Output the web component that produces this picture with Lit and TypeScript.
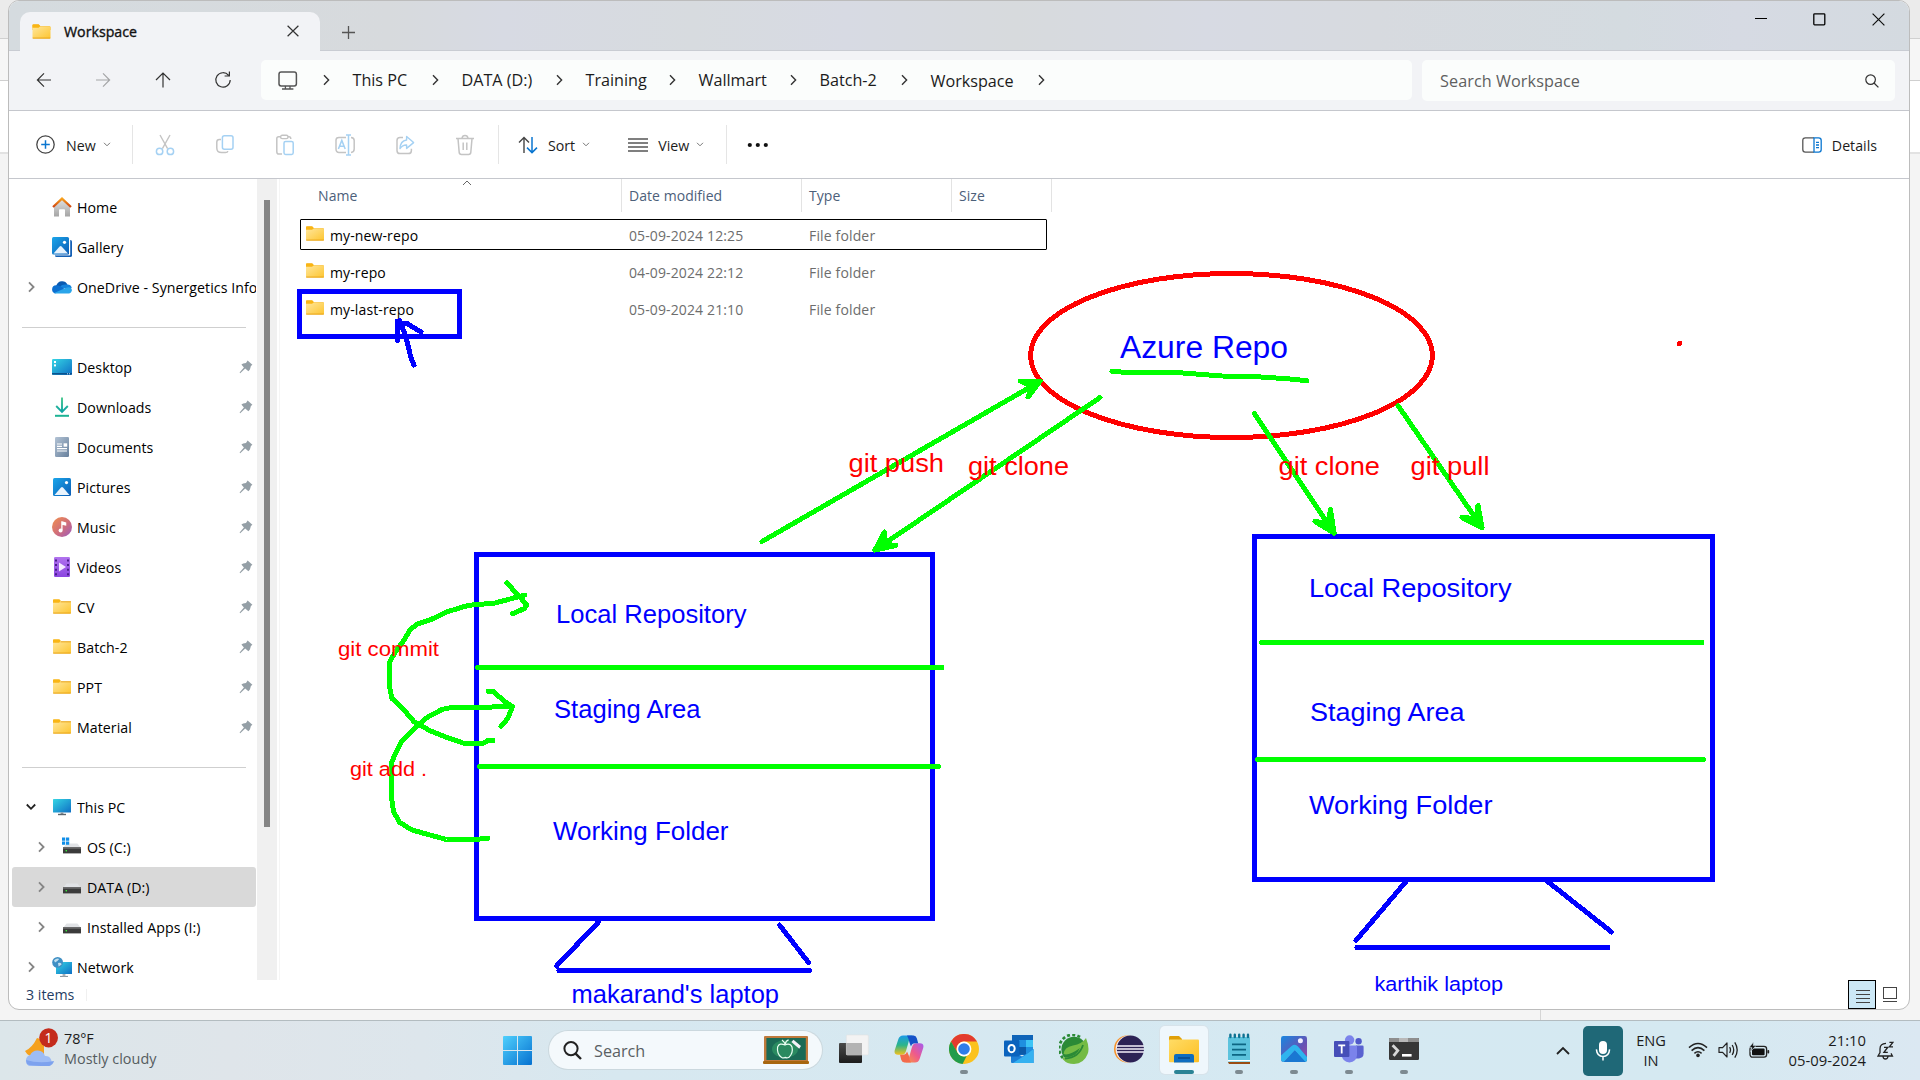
import { LitElement, html, svg, css, nothing } from "lit";
import { customElement } from "lit/decorators.js";
import { classMap } from "lit/directives/class-map.js";

const icon = (w: number, h: number, body: unknown, vw = w, vh = h) =>
  html`<svg class="ico" width=${w} height=${h} viewBox="0 0 ${vw} ${vh}" fill="none">${body}</svg>`;

/* ---------- file icons ---------- */
const folder = (w = 18, h = 15) =>
  icon(w, h, svg`
    <path d="M0 1.2Q0 .2 1 .2H6.2L8 2.2H17Q18 2.2 18 3.2V6H0Z" fill="#f7b316"/>
    <rect x="0" y="2.6" width="18" height="12" rx=".8" fill="url(#fold)"/>
    <path d="M.2 14.1H17.8" stroke="#e8a317" stroke-width="1"/>
    <path d="M0 .8H6.3L7.6 2.2 6.2 3.8H0Z" fill="#f9b514"/>
    <defs><linearGradient id="fold" x1="0" y1="0" x2="1" y2="1"><stop offset="0" stop-color="#ffe69b"/><stop offset="1" stop-color="#fdc530"/></linearGradient></defs>`, 18, 15);

const blueGrad = svg`<defs><linearGradient id="bl" x1="0" y1="0" x2="1" y2="1"><stop offset="0" stop-color="#1ba6ea"/><stop offset="1" stop-color="#0a5cb5"/></linearGradient></defs>`;
const cyanGrad = svg`<defs><linearGradient id="cy" x1="0" y1="0" x2="1" y2="1"><stop offset="0" stop-color="#35d6e4"/><stop offset="1" stop-color="#0f6fc5"/></linearGradient></defs>`;

const drive = svg`<path d="M4.6 6.5H15.4L19 11H1Z" fill="#e1e3e6"/><rect x="1" y="10.4" width="18" height="6" fill="#3b3b3b"/><rect x="1" y="10.4" width="18" height="1.6" fill="#5f5f5f"/><rect x="3.6" y="13" width="1.4" height="1.4" fill="#3cf03c"/>`;

const sideIcons: Record<string, unknown> = {
  home: icon(20, 20, svg`<path d="M2 9 10 2 18 9V19.5H13V13Q13 12.2 12.2 12.2H7.8Q7 12.2 7 13V19.5H2Z" fill="url(#hg)"/><path d="M1 10 10 1.6 19 10" stroke="url(#ho)" stroke-width="2.2"/>
    <defs><linearGradient id="hg" x1="0" y1="0" x2="0" y2="1"><stop stop-color="#e2e2e2"/><stop offset="1" stop-color="#a5a5a5"/></linearGradient><linearGradient id="ho" x1="0" y1="0" x2="0" y2="1"><stop stop-color="#f7a11c"/><stop offset="1" stop-color="#cf4310"/></linearGradient></defs>`),
  gallery: icon(20, 20, svg`${blueGrad}<rect x="3" y="3" width="17" height="17" rx="1.6" fill="#1560b4"/><rect x="17" y="2" width="1.2" height="16" fill="#fff"/><rect x="2" y="17.2" width="16" height="1.2" fill="#fff"/><rect x="0" y="0" width="17" height="17.4" rx="1.5" fill="url(#bl)"/><path d="M1.5 16.6 7.6 9.5Q8.6 8.4 9.6 9.5L16 16.6Z" fill="#e6f2fd"/><circle cx="12.5" cy="5.3" r="1.6" fill="#fff"/>`),
  onedrive: icon(20, 20, svg`<path d="M4.4 8.3A6 6 0 0 1 15.5 7.6L10 13H3Z" fill="#0a5ab2"/><path d="M.1 12.2A4.2 4.2 0 0 1 4.4 8.2Q6 8 8 9.2L14 13 3 16.4A4.1 4.1 0 0 1 .1 12.2Z" fill="#0c6fd0"/><path d="M15.4 7.6A4.5 4.5 0 0 1 19.8 11Q18 10.5 15 12L11 11 8.2 9.4Q10 6.8 15.4 7.6Z" fill="#1583dd"/><path d="M2 16.1 13 11.2Q15.6 9.8 18.4 10.4A3.3 3.3 0 0 1 17.2 16.4H4Q2.8 16.4 2 16.1Z" fill="#2aa5ea"/>`),
  desktop: icon(20, 20, svg`${cyanGrad}<rect y="2" width="20" height="16" rx="1.2" fill="url(#cy)"/><path d="M0 16.8H20" stroke="#0a4b86" stroke-width="1.4"/><rect x="2" y="4" width="2" height="2" fill="#fff"/><rect x="2" y="7.4" width="2" height="2" fill="#fff"/><path d="M15 16.8H19" stroke="#bfe4f5" stroke-dasharray="1 1"/>`),
  downloads: icon(20, 20, svg`<path d="M10 .5V14.5M4.2 9 10 14.8 15.8 9" stroke="url(#dg)" stroke-width="1.9"/><path d="M3 18.8H17" stroke="#1db394" stroke-width="2"/><defs><linearGradient id="dg" gradientUnits="userSpaceOnUse" x1="0" y1="0" x2="0" y2="15"><stop stop-color="#49c98c"/><stop offset="1" stop-color="#0ca4a4"/></linearGradient></defs>`),
  documents: icon(20, 20, svg`<rect x="3" y="0" width="14" height="20" rx="1.3" fill="url(#dc)"/><path d="M5 7H10M5 9.4H10M5 11.7H15M5 14H15" stroke="#fff" stroke-width="1.2"/><rect x="11.6" y="6.3" width="3.6" height="3.4" fill="#fff"/><defs><linearGradient id="dc" x1="0" y1="0" x2="1" y2="1"><stop stop-color="#b3c3d5"/><stop offset="1" stop-color="#67809c"/></linearGradient></defs>`),
  pictures: icon(20, 20, svg`${blueGrad}<rect x="1" y="1" width="18" height="18" rx="1.5" fill="url(#bl)"/><path d="M2.5 18 9 10.6Q10 9.6 11 10.6L17.5 18Z" fill="#eaf4fd"/><circle cx="14.5" cy="5.6" r="1.6" fill="#fff"/>`),
  music: icon(20, 20, svg`<circle cx="10" cy="10" r="10" fill="url(#mu)"/><path d="M9.9 4.2V13M9.9 4.9 13.6 6V8L9.9 7" stroke="#fff" stroke-width="1.3" fill="#fff"/><circle cx="8.6" cy="13.4" r="2" fill="#fff"/><defs><linearGradient id="mu" x1="0" y1="0" x2="1" y2="1"><stop stop-color="#f2914c"/><stop offset=".55" stop-color="#cf6d7c"/><stop offset="1" stop-color="#9a5cc2"/></linearGradient></defs>`),
  videos: icon(20, 20, svg`<rect x="2" y="0" width="16" height="20" rx="1.3" fill="url(#vi)"/><path d="M4 2.5V19M16 2.5V19" stroke="#4a1e8c" stroke-width="2" stroke-dasharray="2 2.6"/><path d="M7 5.6 14 10 7 14.4Z" fill="#f4eaff"/><defs><linearGradient id="vi" x1="0" y1="0" x2="0" y2="1"><stop stop-color="#b173ee"/><stop offset="1" stop-color="#8a45e0"/></linearGradient></defs>`),
  pc: icon(20, 20, svg`${cyanGrad}<rect x="1" y="2" width="18" height="13.5" rx=".6" fill="url(#cy)"/><rect x="8.6" y="15.5" width="2.8" height="1.6" fill="#8a949c"/><path d="M6 17.5H14" stroke="#5d666d" stroke-width="1.4"/>`),
  osdrive: icon(20, 20, svg`${drive}<path d="M0 .6H3.2V3.8H0ZM4 .6H7.2V3.8H4ZM0 4.6H3.2V7.8H0ZM4 4.6H7.2V7.8H4Z" fill="#118ee8"/>`),
  drive: icon(20, 20, svg`${drive}`),
  network: icon(20, 20, svg`${cyanGrad}<rect x="4" y="5" width="16" height="12" fill="url(#cy)"/><path d="M8 19.6H16" stroke="#8d979f" stroke-width="1.4"/><rect x="10.6" y="17" width="2.8" height="2.3" fill="#a8b0b6"/><circle cx="5.6" cy="5.4" r="5.4" fill="#3f8fc4"/><path d="M2 3.2Q5 .6 7.2 2 5 5 3 5.5ZM6 6Q9.4 5 9.6 7.4L6.6 9.4Z" fill="#c2e0ef"/>`),
  folder: icon(20, 20, svg`<g transform="translate(1 2)"><rect y="2.6" width="18" height="12" rx=".8" fill="url(#fs)"/><path d="M.2 14.1H17.8M7.5 2.8H18" stroke="#e8a317"/><path d="M0 .9Q0 .2.8.2H6.3L7.8 1.8 6.2 3.8H0Z" fill="#f9b514"/></g><defs><linearGradient id="fs" x1="0" y1="0" x2="1" y2="1"><stop stop-color="#ffe69b"/><stop offset="1" stop-color="#fdc530"/></linearGradient></defs>`),
};

const pin = icon(14, 14, svg`<path d="M8.6.4 13.4 4.8 11.9 6 10.9 9.5 9.4 11.2 6.2 8.6 1.2 13.2 .6 12.6 4.9 7.4 2.4 4.6 4.2 3.6 7 3Z" fill="#949fa6"/>`);
const chevR = (c: string, s = 1.8) => icon(7, 12, svg`<path d="M1 1.3 5.6 6 1 10.7" stroke=${c} stroke-width=${s}/>`);
const chevD = icon(8, 5, svg`<path d="M1 .8 4 3.8 7 .8" stroke="#777" stroke-width="1"/>`);

type Side = { label: string; icon: string; pin?: boolean; chev?: "r" | "d"; sub?: boolean; sel?: boolean };
const nav: (Side | null)[] = [
  { label: "Home", icon: "home" },
  { label: "Gallery", icon: "gallery" },
  { label: "OneDrive - Synergetics Infotech", icon: "onedrive", chev: "r" },
  null,
  { label: "Desktop", icon: "desktop", pin: true },
  { label: "Downloads", icon: "downloads", pin: true },
  { label: "Documents", icon: "documents", pin: true },
  { label: "Pictures", icon: "pictures", pin: true },
  { label: "Music", icon: "music", pin: true },
  { label: "Videos", icon: "videos", pin: true },
  { label: "CV", icon: "folder", pin: true },
  { label: "Batch-2", icon: "folder", pin: true },
  { label: "PPT", icon: "folder", pin: true },
  { label: "Material", icon: "folder", pin: true },
  null,
  { label: "This PC", icon: "pc", chev: "d" },
  { label: "OS (C:)", icon: "osdrive", chev: "r", sub: true },
  { label: "DATA (D:)", icon: "drive", chev: "r", sub: true, sel: true },
  { label: "Installed Apps (I:)", icon: "drive", chev: "r", sub: true },
  { label: "Network", icon: "network", chev: "r" },
];

@customElement("nav-pane")
class NavPane extends LitElement {
  static styles = css`
    :host { display: flex; width: 269px; height: 801px; overflow: hidden; background: #fff; flex: none; }
    .list { width: 248px; padding-top: 8px; box-sizing: border-box; overflow: hidden; }
    .row { display: flex; align-items: center; height: 40px; width: 244px; margin-left: 3px; border-radius: 3px; box-sizing: border-box; }
    .sel { background: #d9d9d9; }
    .chev { width: 40px; padding-left: 16px; box-sizing: border-box; display: flex; flex: none; }
    .sub .chev { width: 50px; padding-left: 26px; }
    .down .chev { padding-left: 14px; }
    .ico { display: block; flex: none; }
    .label { margin-left: 5px; font-size: 14.2px; white-space: nowrap; color: #000; letter-spacing: 0.04px; flex: 1; min-width: 0; overflow: hidden; }
    .pin { margin-right: 3px; }
    .rule { height: 40px; display: flex; align-items: center; padding: 0 11px 0 13px; }
    .rule::before { content: ""; height: 1px; flex: 1; background: #cfcfcf; }
    .bar { width: 20px; background: #f0f0f0; box-sizing: border-box; padding: 21px 7px 0; }
    .thumb { height: 627px; width: 6px; background: #858585; }
  `;
  render() {
    return html`<div class="list">
        ${nav.map((n) =>
          n
            ? html`<div class=${classMap({ row: true, sub: !!n.sub, sel: !!n.sel, down: n.chev === "d" })}>
                <div class="chev">${n.chev === "r" ? chevR("#858585") : n.chev === "d"
                  ? icon(10, 8, svg`<path d="M.8 1.5 5 5.8 9.2 1.5" stroke="#222" stroke-width="1.8"/>`) : nothing}</div>
                ${sideIcons[n.icon]}
                <div class="label">${n.label}</div>
                ${n.pin ? html`<div class="pin">${pin}</div>` : nothing}
              </div>`
            : html`<div class="rule"></div>`
        )}
      </div>
      <div class="bar"><div class="thumb"></div></div>`;
  }
}

const files = [
  ["my-new-repo", "05-09-2024 12:25"],
  ["my-repo", "04-09-2024 22:12"],
  ["my-last-repo", "05-09-2024 21:10"],
];

@customElement("file-list")
class FileList extends LitElement {
  static styles = css`
    :host { display: block; flex: 1; border-left: 1px solid #f5f5f5; margin-left: 1px; }
    .ico { display: block; flex: none; }
    .head { display: grid; grid-template-columns: 342px 180px 150px 100px; height: 33px; color: #4c607a; font-size: 14px; position: relative; }
    .h { border-right: 1px solid #e3e3e3; padding-left: 7px; line-height: 33px; box-sizing: border-box; letter-spacing: 0.05px; }
    .h.name { padding-left: 38px; letter-spacing: 0.1px; }
    .caret { position: absolute; left: 182px; top: 1px; }
    .rows { padding: 4px 0 0 20px; }
    .row { display: grid; grid-template-columns: 329px 180px 1fr; width: 747px; height: 37px; padding: 4px 0 2px; box-sizing: border-box; font-size: 14px; line-height: 31px; color: #6d6d6d; }
    .row .name { color: #000; }
    .row.focus { height: 31px; margin: 3px 0; padding: 1px 0 0; outline: 1px solid #000; outline-offset: -1px; border-radius: 1px; }
    .name { display: flex; align-items: center; gap: 6px; padding-left: 6px; letter-spacing: 0.12px; }
    .name .ico { margin-bottom: 5px; }
    .date { letter-spacing: 0.12px; }
    .type { letter-spacing: 0.15px; }
  `;
  render() {
    return html`<div class="head">
        <div class="h name">Name</div><div class="h">Date modified</div><div class="h">Type</div><div class="h">Size</div>
        <div class="caret">${icon(10, 6, svg`<path d="M1 5 5 1 9 5" stroke="#666"/>`)}</div>
      </div>
      <div class="rows">
        ${files.map(([n, d], i) => html`<div class=${classMap({ row: true, focus: i === 0 })}>
          <div class="name">${folder()}<span>${n}</span></div><div class="date">${d}</div><div class="type">File folder</div>
        </div>`)}
      </div>`;
  }
}

/* ---------- pen annotations ---------- */
const label = (x: number, y: number, w: number, s: number, c: string, t: string) =>
  svg`<text x=${x} y=${y} textLength=${w} lengthAdjust="spacingAndGlyphs" font-size=${s} fill=${c}>${t}</text>`;
const B = "#0000ff", R = "#ff0000";

@customElement("ink-layer")
class InkLayer extends LitElement {
  static styles = css`
    :host { position: absolute; inset: 0; pointer-events: none; }
    svg { display: block; }
    text { font-family: "Liberation Sans", Arial, sans-serif; }
    .ink { fill: none; stroke-width: 5; stroke-linecap: round; stroke-linejoin: round; shape-rendering: crispEdges; }
    .blue { stroke: #0000ff; }
    .green { stroke: #00ff00; }
    .head { fill: #00ff00; }
    .red { stroke: #ff0000; }
    .box { stroke-linejoin: miter; }
    .dot { fill: #ff0000; stroke: none; }
  `;
  render() {
    return html`<svg width="1920" height="1080" viewBox="0 0 1920 1080">
      <g class="ink blue">
        <g class="box">
          <rect x="299.5" y="291.5" width="160" height="45"/>
          <rect x="476.5" y="554.5" width="456" height="364"/>
          <rect x="1254.5" y="536.5" width="458" height="342.5"/>
        </g>
        <path d="M414 365 411 358 406 337 399.5 320.5M397.5 340.5V321M399 323.5H407L421 332"/>
        <path d="M598.5 922 556.5 966M779.5 925 808.5 962.5M559 970.5H809.5"/>
        <path d="M1406 881.5 1356 940.5M1547 881 1611.5 932M1357 947.5H1608"/>
      </g>
      <g class="ink red">
        <ellipse cx="1231.5" cy="355.5" rx="201" ry="82"/>
        <rect class="dot" x="1677" y="341" width="5" height="5" rx="2"/>
      </g>
      <g class="ink green">
        <path d="M477.5 667.5H942M479.5 766.5H938.5M1261.5 642.5H1702M1257.5 759.5H1703.5"/>
        <path d="M1112 371.5 1130 372.5 1176 372.5 1222 376 1254 376.5 1290 379 1307 380.7"/>
        <path d="M525 595 510 599 493 603.5 475 604.5 465 606.3 446.5 612 430 620 417 624 410 630 404 640 395.5 651.7 389.4 662.3V685.7L391.8 698.3 404 710 414 721.7 430 730.7 446.5 737.3 465 743.7H482L488 740.5H493"/>
        <path d="M507 583 518 595 527 605 524 608.7 512.6 613.7"/>
        <path d="M488 838.3 475 839.5H446.5L430 835 412 830 399.6 822.3 393.5 811.7 391.4 796.7V763.3L395.5 753.3 401.6 741.7 416 726.7 428 716.7 442.4 709.3 452.6 707.3H483L512.6 706.3"/>
        <path d="M488 691.3 493.5 691.7 503.7 700.7 512.5 706.7 507.8 718.3 501 726.5"/>
        <path d="M762 541.5 1039 382M1100 397.5 875 550M1254.5 413.5 1334 533M1398 405.5 1482 527.5"/>
        <g class="head">
          <path d="M1040 381 1020 381 1032 386 1028 397Z"/>
          <path d="M875 550 884.5 532 884 544 896 545.5Z"/>
          <path d="M1334 533 1330.5 509.5 1328 523 1315 521.5Z"/>
          <path d="M1482 527.5 1478 505.5 1476 518.5 1462 517.5Z"/>
        </g>
      </g>
      ${label(1120, 358, 168, 31, B, "Azure Repo")}
      ${label(556, 623, 190.5, 26, B, "Local Repository")}
      ${label(554, 718, 146.5, 26, B, "Staging Area")}
      ${label(553, 840, 175.5, 26, B, "Working Folder")}
      ${label(571.5, 1003, 207.5, 26, B, "makarand's laptop")}
      ${label(1309, 597, 202.5, 26, B, "Local Repository")}
      ${label(1310, 721, 154.5, 26, B, "Staging Area")}
      ${label(1309, 814, 183.5, 26, B, "Working Folder")}
      ${label(1374.5, 991, 128.5, 20.5, B, "karthik laptop")}
      ${label(848.5, 472, 95.5, 25.5, R, "git push")}
      ${label(968, 475, 101, 25.5, R, "git clone")}
      ${label(1278.5, 475, 101.5, 25.5, R, "git clone")}
      ${label(1410.5, 475, 79, 25.5, R, "git pull")}
      ${label(338, 656, 101, 20.5, R, "git commit")}
      ${label(350, 776, 77, 20.5, R, "git add .")}
    </svg>`;
  }
}

/* ---------- command bar icons ---------- */
const G = "#c4c4c4", LB = "#a5d1f3";
const cmd: Record<string, unknown> = {
  cut: icon(20, 22, svg`<path d="M5 1 12.6 14.6M15 1 7.4 14.6" stroke=${G} stroke-width="1.4"/><circle cx="4.6" cy="17.4" r="3.2" stroke=${LB} stroke-width="1.5"/><circle cx="15.4" cy="17.4" r="3.2" stroke=${LB} stroke-width="1.5"/>`),
  copy: icon(20, 22, svg`<path d="M6 5.4H4.4Q1.8 5.4 1.8 8V14Q1.8 18.6 6.6 18.6H10.4Q12.6 18.6 12.8 17" stroke=${G} stroke-width="1.5"/><rect x="7.4" y="1.8" width="10.6" height="13.4" rx="2" stroke=${LB} stroke-width="1.5"/>`),
  paste: icon(20, 22, svg`<path d="M6 2.8H3.6Q1.8 2.8 1.8 4.6V17.4Q1.8 20 3.8 20H7M12.8 2.8H14Q15.8 2.8 15.8 5" stroke=${G} stroke-width="1.5"/><rect x="5.6" y="1.2" width="7.4" height="3.4" rx="1.6" stroke=${G} stroke-width="1.4"/><rect x="9" y="7.4" width="9.2" height="13" rx="1.6" stroke=${LB} stroke-width="1.5"/>`),
  rename: icon(20, 22, svg`<path d="M11 3.4H4Q1 3.4 1 6V15Q1 18.4 4 18.4H11M16 3.4Q19.2 3.6 19.2 6.6V15Q19.2 18.2 16 18.4" stroke=${G} stroke-width="1.5"/><path d="M11 1H16M11 21H16M13.5 1V21" stroke=${LB} stroke-width="1.5"/><path d="M3.4 15 6.8 6.4 10.2 15M4.6 12.2H9" stroke=${LB} stroke-width="1.5"/>`),
  share: icon(20, 22, svg`<path d="M8 3.4H5Q2 3.4 2 6.4V16.4Q2 19.6 5 19.6H13.4Q16.4 19.6 16.4 16.4V14.8" stroke=${G} stroke-width="1.5"/><path d="M11.6 2.4 18.6 8.6 11.6 14.4V11Q7.6 10.8 5 14.6 5.2 7 11.6 6Z" stroke=${LB} stroke-width="1.4" stroke-linejoin="round"/>`),
  del: icon(20, 22, svg`<path d="M1 4.4H19M7 4.2Q7.4 1.4 10 1.4T13 4.2M3 4.6 4.2 18.4Q4.4 20.4 6.4 20.4H13.6Q15.6 20.4 15.8 18.4L17 4.6M8.2 8.4V16M11.8 8.4V16" stroke=${G} stroke-width="1.5"/>`),
};

/* ---------- taskbar icons ---------- */
const winLogo = icon(29, 29, svg`<defs><linearGradient id="wl" gradientUnits="userSpaceOnUse" x1="0" y1="0" x2="29" y2="29"><stop stop-color="#4fd0fd"/><stop offset="1" stop-color="#0671d0"/></linearGradient></defs><path d="M0 1Q0 0 1 0H14V14H0ZM15 0H28Q29 0 29 1V14H15ZM0 15H14V29H1Q0 29 0 28ZM15 15H29V28Q29 29 28 29H15Z" fill="url(#wl)"/>`);
const board = icon(46, 28, svg`<rect x="1" y="0" width="44" height="26" rx="1" fill="#c07a3c"/><rect x="3.4" y="2" width="39.4" height="22" fill="#1b6a55"/><ellipse cx="22" cy="13" rx="13" ry="9" fill="#2a8a60"/><rect y="25" width="46" height="3" rx="1" fill="#a8660f"/><path d="M22 9Q16.5 6.4 14.6 11 13.6 18 18.6 21.4 20.4 22.4 22 21.4 24 22.4 26 21.2 30.4 17 29 11 27 6.8 22 9ZM22 9Q21.8 6 19 4M22.4 8Q22.6 4.6 25.6 3.8" stroke="#eafff2" stroke-width="1.2"/><path d="M28.4 6 30.4 3.8 38 10 36.2 12.8Z" fill="#f3f0f7"/>`);

const apps: { i: unknown; run?: boolean; active?: boolean }[] = [
  { i: icon(30, 30, svg`<defs><linearGradient id="tv" x1="0" y1="0" x2="0" y2="1"><stop stop-color="#4a4a4a"/><stop offset="1" stop-color="#1c1c1c"/></linearGradient></defs><rect x="0" y="9" width="23" height="20" rx="1" fill="url(#tv)"/><rect x="7.4" y="1" width="22" height="20" rx="1" fill="#f3f3f3" stroke="#e2e2e2" stroke-width=".6"/><rect x="7.4" y="9" width="15.6" height="12" fill="#b3b3b3"/>`) },
  { i: icon(30, 30, svg`<defs><linearGradient id="ca" x1="0" y1="0" x2="0" y2="1"><stop stop-color="#1b9be8"/><stop offset=".5" stop-color="#2bb58a"/><stop offset="1" stop-color="#f4c11c"/></linearGradient><linearGradient id="cb" x1="1" y1="0" x2="0" y2="1"><stop stop-color="#a55bf0"/><stop offset=".5" stop-color="#ee5a8c"/><stop offset="1" stop-color="#fb9d3c"/></linearGradient></defs>
    <path d="M19 1.5H9Q5.6 1.5 4.4 5L.8 16Q-.4 20.6 4 20.8H8Q11 20.6 12 17L15 6.6Q16 2 19 1.5Z" fill="url(#ca)"/><path d="M11 28.5H21Q24.4 28.5 25.6 25L29.2 14Q30.4 9.4 26 9.2H22Q19 9.4 18 13L15 23.4Q14 28 11 28.5Z" fill="url(#cb)"/><path d="M13 1.5H19.6Q22 1.6 22.8 4.2L24.2 9.2H21Q18 9.2 17 12.4L15.6 9Q14.8 5 13 1.5Z" fill="#1552c8"/><path d="M17 28.5H10.4Q8 28.4 7.2 25.8L6 20.8H9Q12 20.8 13 17.6L15 22Q15 26 17 28.5Z" fill="#f36a4c"/>`) },
  { run: true, i: icon(30, 30, svg`<circle cx="15" cy="15" r="15" fill="#fbc21d"/><path d="M2 7.5A15 15 0 0 1 28 7.5H15A7.5 7.5 0 0 0 8.2 18.4Z" fill="#e33b2e"/><path d="M2 7.5 8.6 18.8A7.5 7.5 0 0 0 17.6 22L13.6 30A15 15 0 0 1 2 7.5Z" fill="#219c4b"/><circle cx="15" cy="15" r="7.4" fill="#fff"/><circle cx="15" cy="15" r="5.8" fill="#2f7de9"/>`) },
  { i: icon(30, 30, svg`<rect x="8" y="1" width="21" height="20" fill="#0f64b8"/><path d="M15 6H22V13H15Z" fill="#1f8fe0"/><path d="M22 6H29V13H22Z" fill="#3dc4f5"/><path d="M15 13H22V20H15Z" fill="#0c59a8"/><path d="M22 13H29V20H22Z" fill="#1f8fe0"/><path d="M7 15 18 22.6 29.6 15V29H8Q7 29 7 28Z" fill="#1d7fd6"/><path d="M29.6 15V29H9L20 22Z" fill="#35b1f0"/><rect x="0" y="6.6" width="15.4" height="16" rx="1" fill="#0b63bd"/><ellipse cx="7.6" cy="14.6" rx="3.1" ry="3.7" stroke="#fff" stroke-width="2"/>`) },
  { i: icon(30, 30, svg`<circle cx="15" cy="15.4" r="12.6" fill="#2b8a36"/><path d="M4 24A13.6 13.6 0 0 1 21 3" stroke="#2b8a36" stroke-width="2.8" stroke-dasharray="3 2.2"/><path d="M27 4Q31 14 28.6 20 25 29.6 15 30 8 30 4 25.4 3 24 5 23.4 17 24 21 14 10 22 4.6 20 5 13 14 11.4 23 10 27 4Z" fill="#74bb44"/><path d="M6 24.6Q20 23.6 24 11" stroke="#2b8a36" stroke-width="1.8"/>`) },
  { i: icon(30, 30, svg`<ellipse cx="13" cy="15" rx="13" ry="13.6" fill="#f6922a"/><ellipse cx="15" cy="15" rx="13.4" ry="13.6" fill="#f5eef2"/><circle cx="16.4" cy="15" r="13.6" fill="#2c2255"/><path d="M3 12H30M2.8 15H30M3 18H30" stroke="#f3f0fa" stroke-width="1.5"/>`) },
  { active: true, i: icon(30, 30, svg`<path d="M0 3.4Q0 2 1.4 2H10L13 5V10H0Z" fill="#e0a009"/><rect y="5.6" width="30" height="22.6" rx="1" fill="url(#ex)"/><path d="M5 28.4V22Q5 20 7 20H23Q25 20 25 22V28.4Z" fill="#0f6dbf"/><path d="M9 24H21" stroke="#063f7c" stroke-width="1.2"/><defs><linearGradient id="ex" x1="0" y1="0" x2="1" y2="1"><stop stop-color="#ffdc66"/><stop offset="1" stop-color="#fdbf22"/></linearGradient></defs>`) },
  { run: true, i: icon(30, 32, svg`<rect x="4" y="4" width="22" height="26" rx="1" fill="#5cc3dd"/><path d="M4 27H26V28.4H4Z" fill="#fff"/><path d="M4 29H26V31H5Z" fill="#9a4c12"/><path d="M8 11.4H22M8 16.6H22M8 21.8H22" stroke="#0c6683" stroke-width="1.7"/><path d="M6.4 1.8V4M10.8 1.8V4M15.2 1.8V4M19.6 1.8V4M24 1.8V4" stroke="#0e7191" stroke-width="2.4" stroke-linecap="round"/>`) },
  { run: true, i: icon(30, 30, svg`<defs><linearGradient id="ph" x1="0" y1="0" x2="1" y2="1"><stop stop-color="#1787e0"/><stop offset=".6" stop-color="#6653b5"/><stop offset="1" stop-color="#a34aa0"/></linearGradient></defs><rect x="2" y="2" width="26" height="26" rx="2.4" fill="url(#ph)"/><path d="M14 28 19 13 28 23V25.6Q28 28 25.6 28Z" fill="#1670c9"/><path d="M2 21.6 12.6 12Q16 9.4 19 12.4L28 23V25.6Q28 28 26.4 28L15.8 16.6 5 28Q2 28 2 25.6Z" fill="#2fb4ee"/><path d="M15.8 16.6 26.4 28H5Z" fill="#1a78d2"/><circle cx="21.4" cy="6.8" r="2.5" fill="#f3f0ff"/>`) },
  { run: true, i: icon(30, 30, svg`<circle cx="15.6" cy="6" r="4.7" fill="#7b83eb"/><circle cx="24.6" cy="7.2" r="3.2" fill="#5059c9"/><path d="M22 11.6H28.4Q29.6 11.6 29.6 13V19.6Q29.6 24 25 24.4H22Z" fill="#5a62d0"/><path d="M7.6 11.6H23V21Q22.6 28 15.4 28.4 8.4 28 7.6 21Z" fill="#7b83eb"/><rect x="0" y="7" width="15.4" height="16" rx="1" fill="#464eb8"/><path d="M4.2 11.4H11.2M7.7 11.4V19.4" stroke="#fff" stroke-width="1.8"/>`) },
  { run: true, i: icon(30, 30, svg`<rect x="0" y="4" width="30" height="22" rx="1.2" fill="#373737"/><path d="M0 8V5.2Q0 4 1.2 4H28.8Q30 4 30 5.2V8Z" fill="#8e8e8e"/><rect x="10" y="4" width="9" height="4" fill="#b9b9b9"/><path d="M3.6 11.2 8.8 16.6 4.6 21.8" stroke="#d7d7d7" stroke-width="2.8"/><rect x="13" y="20" width="9.6" height="2.6" fill="#fff"/>`) },
];

@customElement("task-bar")
class TaskBar extends LitElement {
  static styles = css`
    :host { display: flex; align-items: flex-start; height: 60px; box-sizing: border-box; border-top: 1px solid #b3bcc0; color: #1b1b1b;
      background: linear-gradient(90deg, #dce6ea 0, #dfe5ea 12%, #dde6ec 22%, #d7e8f0 32%, #d5e9f2 70%, #d5e9f1 88%, #dbe8f2 100%); }
    .ico { display: block; flex: none; }
    .weather { display: flex; width: 503px; padding: 7px 0 0 24px; box-sizing: border-box; }
    .wtext { font-size: 14.4px; line-height: 20px; margin-left: 6px; margin-top: 1px; }
    .muted { color: #555c60; letter-spacing: 0.02px; }
    .hot { letter-spacing: -0.1px; }
    .start { margin-top: 15px; width: 46px; }
    .search { display: flex; align-items: center; width: 273px; height: 38px; margin-top: 10px; border-radius: 19px; background: #f4f9fc; box-shadow: 0 0 0 1px #cbd8de; box-sizing: border-box; padding: 0 13px 0 14px; }
    .search .q { flex: 1; margin: 1px 0 0 12px; font-size: 16.2px; color: #5a5f63; }
    .apps { display: flex; margin-left: 8px; gap: 7px; margin-top: 5px; }
    .app { width: 48px; height: 48px; display: flex; flex-direction: column; align-items: center; border-radius: 5px; }
    .active { background: #eff7fc; box-shadow: 0 0 0 1px #d7e3ea; }
    .glyph { height: 44px; display: flex; align-items: center; padding-top: 2px; box-sizing: border-box; }
    .dot { width: 8px; height: 4px; border-radius: 2px; background: #7d8a91; }
    .active .dot { width: 20px; background: #2b8395; }
    .tray { display: flex; margin-left: auto; height: 58px; padding-right: 26px; align-items: center; }
    .up { margin-right: 13px; }
    .mic { width: 40px; height: 50px; border-radius: 5px; background: #1f6877; display: flex; align-items: center; justify-content: center; margin-right: 12px; margin-top: 1px; }
    .lang { font-size: 14.6px; line-height: 20px; text-align: center; width: 32px; margin-right: 21px; letter-spacing: -0.1px; }
    .clock { font-size: 14.8px; line-height: 20px; text-align: right; width: 85px; margin: 0 11px 0 11px; white-space: nowrap; }
    .date { letter-spacing: 0.03px; }
    .sp { margin-left: 10px; }
    .bt { margin-left: 10px; }
  `;
  render() {
    return html`
      <div class="weather">
        ${icon(34, 44, svg`<path d="M13 10Q8 20 1 23 4 29 12 29H20V12Z" fill="#f5a11e"/><path d="M6 37A6 6 0 0 1 7.2 26 8 8 0 0 1 22 27 6 6 0 0 1 27 37Z" fill="#9dbcf5" transform="translate(-1 1)"/><path d="M3 36Q6 38 25 38 29 37 30 33 15 36 2 32Z" fill="#7da2ee"/><ellipse cx="24.6" cy="9.8" rx="9.4" ry="9.6" fill="#c42b1c"/><text x="24.6" y="15" text-anchor="middle" fill="#fff" font-size="14" font-family="Open Sans">1</text>`)}
        <div class="wtext"><div class="hot">78°F</div><div class="muted">Mostly cloudy</div></div>
      </div>
      <div class="start">${winLogo}</div>
      <div class="search">
        ${icon(19, 19, svg`<circle cx="8" cy="7.6" r="6.6" stroke="#222" stroke-width="2"/><path d="M12.6 12.6 18 18" stroke="#222" stroke-width="2.4"/>`)}
        <div class="q">Search</div>${board}
      </div>
      <div class="apps">
        ${apps.map((a) => html`<div class=${classMap({ app: true, active: !!a.active })}>
          <div class="glyph">${a.i}</div>${a.run || a.active ? html`<div class="dot"></div>` : nothing}</div>`)}
      </div>
      <div class="tray">
        <div class="up">${icon(14, 9, svg`<path d="M1 8 7 2 13 8" stroke="#222" stroke-width="1.8"/>`)}</div>
        <div class="mic">${icon(16, 22, svg`<rect x="4" y="1" width="8" height="13" rx="4" fill="#fff"/><path d="M1.4 9.4Q2 16.4 8 16.4T14.6 9.4M8 16.4V20.6" stroke="#fff" stroke-width="1.5"/>`)}</div>
        <div class="lang"><div>ENG</div><div>IN</div></div>
        ${icon(20, 16, svg`<path d="M1 5.6Q10-2.6 19 5.6M3.6 8.6Q10 2.6 16.4 8.6M6.4 11.4Q10 8 13.6 11.4" stroke="#222" stroke-width="1.5"/><circle cx="10" cy="13.4" r="1.8" fill="#222"/>`)}
        <div class="sp">${icon(21, 18, svg`<path d="M1 6.6H4.6L9 2V16L4.6 11.4H1Z" stroke="#222" stroke-width="1.2" stroke-linejoin="round"/><path d="M11.6 6.2Q13.4 9 11.6 11.8M14.2 4Q17.2 9 14.2 14M16.8 1.4Q21.6 9 16.8 16.6" stroke="#222" stroke-width="1.3"/>`)}</div>
        <div class="bt">${icon(21, 17, svg`<rect x="1" y="4.4" width="16.6" height="10.8" rx="2.6" stroke="#222" stroke-width="1.3"/><rect x="3" y="6.4" width="12.6" height="6.8" rx="1" fill="#111"/><rect x="18.4" y="8" width="1.8" height="3.6" rx=".8" fill="#222"/><path d="M4.6-.2.2 5.6H3L1.6 9.6 7 3.6H4.2Z" fill="#111" stroke="#d6e9f1" stroke-width=".6"/>`)}</div>
        <div class="clock"><div>21:10</div><div class="date">05-09-2024</div></div>
        ${icon(17, 19, svg`<path d="M9 2.4Q3 2.6 3 8V11.6L1 15H15.4L14 12.4M6 15.6Q6.4 18 8.4 18T11 15.6" stroke="#222" stroke-width="1.3"/><path d="M7 6.4H10.6L7 11.4H10.8" stroke="#222" stroke-width="1.4"/><path d="M12.4 1.4H15.8L12.4 5.8H16" stroke="#222" stroke-width="1.3"/>`)}
      </div>`;
  }
}

const crumbs = ["This PC", "DATA (D:)", "Training", "Wallmart", "Batch-2", "Workspace"];

@customElement("app-root")
class AppRoot extends LitElement {
  static styles = css`
    :host { display: block; width: 1920px; height: 1080px; overflow: hidden; font-family: "Open Sans", "Noto Sans", sans-serif; }
    .ico { display: block; flex: none; }
    .screen { position: relative; width: 1920px; height: 1080px; display: flex; flex-direction: column;
      background: linear-gradient(#ebebeb 0 38px, #d0d0d0 38px 39px, #f6f6f6 39px 80px, #cfcfcf 80px 81px, #fff 81px 152px, #e2e2e2 152px 154px, #f4f4f4 154px 100%); }
    .window { width: 1902px; height: 1010px; box-sizing: border-box; margin: 0 0 0 8px; border: 1px solid #bcbcbc; border-radius: 11px; background: #fff; display: flex; flex-direction: column; overflow: hidden; flex: none; }
    .title { height: 49px; flex: none; display: flex; border-bottom: 1px solid #c9ccd3;
      background: linear-gradient(90deg, #d5dbdf 0, #d7dadd 20%, #d7dae3 26%, #d7dbdf 36%, #d7dae3 44%, #d7dadd 53%, #d7dae3 63%, #d7dadf 72%, #d4dbe0 85%, #d6dae3 91%, #d4dae0 100%); }
    .tab { width: 300px; height: 40px; margin: 11px 0 -1px 11px; background: #f2f3f6; border-radius: 10px 10px 0 0; display: flex; align-items: center; padding: 0 21px 0 12px; box-sizing: border-box; font-size: 14.2px; color: #111; }
    .tab span { flex: 1; margin-left: 13px; -webkit-text-stroke: 0.35px #111; }
    .tab .ico, .tab span { margin-top: -2px; }
    .plus { margin: 25px 0 0 22px; }
    .wbtns { margin-left: auto; display: flex; gap: 46px; padding: 12px 24px 0 0; }
    .addr { height: 60px; flex: none; box-sizing: border-box; background: #f2f3f6; border-bottom: 1px solid #c5c7cd; display: flex; padding-top: 9px; }
    .navs { display: flex; width: 252px; height: 40px; align-items: center; padding-left: 27px; gap: 42px; box-sizing: border-box; }
    .crumbs { display: flex; align-items: center; width: 1151px; height: 40px; background: #fbfdfc; border-radius: 5px; padding-left: 17px; box-sizing: border-box; font-size: 16.2px; color: #1b1b1b; }
    .first { width: 45px; }
    .crumb { display: flex; align-items: center; }
    .crumb span { margin-left: 22.5px; flex: 1; white-space: nowrap; letter-spacing: -0.02px; padding-bottom: 1px; }
    .crumb.w0 { width: 109px; } .crumb.w1 { width: 124px; } .crumb.w2 { width: 113px; } .crumb.w3 { width: 121px; } .crumb.w4 { width: 111px; } .crumb.w5 { width: 137px; }
    .crumb.w5 span { padding: 1px 0 0; }
    .find { display: flex; align-items: center; margin-left: 10px; width: 473px; height: 41px; background: #fbfdfc; border-radius: 5px; padding: 0 16px 0 18px; box-sizing: border-box; font-size: 16.2px; color: #5f5f5f; }
    .find span { flex: 1; letter-spacing: 0.08px; }
    .cmds { height: 68px; flex: none; box-sizing: border-box; border-bottom: 1px solid #c5c7cd; display: flex; align-items: center; font-size: 14.2px; color: #1b1b1b; padding: 0 32px 0 27px; }
    .cmds span { padding-top: 1px; }
    .new { display: flex; align-items: center; width: 96px; }
    .new span { margin: 0 7px 0 11px; }
    .sep { width: 1px; height: 39px; background: #e5e5e5; }
    .grp { display: flex; align-items: center; width: 365px; padding-left: 22px; box-sizing: border-box; gap: 40px; }
    .grp2 { display: flex; align-items: center; width: 227px; padding-left: 19px; box-sizing: border-box; }
    .grp2 span { margin: 0 7px 0 10px; }
    .grp2 .view { margin-left: 38px; }
    .more { margin-left: 20px; }
    .details { margin-left: auto; display: flex; align-items: center; gap: 10px; }
    .body { display: flex; flex: none; height: 801px; }
    .status { flex: 1; display: flex; color: #1f3d63; font-size: 14.2px; align-items: center; padding-left: 17px; }
    .status .bar { width: 1px; height: 12px; background: #f0f0f0; margin-left: 12px; }
    .views { margin-left: auto; display: flex; align-items: center; padding-right: 12px; gap: 7px; }
    .vsel { width: 28px; height: 29px; box-sizing: border-box; border: 1px solid #000; background: #cce8f6; display: flex; align-items: center; justify-content: center; padding-top: 3px; padding-left: 2px; }
    .gap { height: 10px; flex: none; display: flex; }
    .gap::before { content: ""; width: 1540px; border-right: 1px solid #d5d5d5; }
    task-bar { flex: none; }
  `;
  render() {
    const arrow = svg`<path d="M15 8H1.5M8 1.4 1.4 8 8 14.6" stroke="#333" stroke-width="1.2"/>`;
    return html`<div class="screen">
      <div class="window">
        <div class="title">
          <div class="tab">${folder(19, 15)}<span>Workspace</span>${icon(12, 12, svg`<path d="M.6.8 11.4 11.2M11.4.8.6 11.2" stroke="#333" stroke-width="1.2"/>`)}</div>
          <div class="plus">${icon(13, 13, svg`<path d="M6.5 0V13M0 6.5H13" stroke="#555" stroke-width="1.3"/>`)}</div>
          <div class="wbtns">
            ${icon(12, 12, svg`<path d="M0 5.5H12" stroke="#000"/>`)}
            ${icon(13, 13, svg`<rect x=".8" y=".8" width="11" height="11" rx=".8" stroke="#000" stroke-width="1.3"/>`)}
            ${icon(13, 13, svg`<path d="M.6.6 12.4 12.4M12.4.6.6 12.4" stroke="#111" stroke-width="1.2"/>`)}
          </div>
        </div>
        <div class="addr">
          <div class="navs">
            ${icon(16, 16, arrow)}
            ${icon(18, 16, svg`<g transform="translate(17 0) scale(-1 1)" opacity=".4">${arrow}</g>`)}
            ${icon(18, 16, svg`<path d="M9 15.5V1.4M2 8 9 1 16 8" stroke="#333" stroke-width="1.2"/>`)}
            ${icon(18, 18, svg`<path d="M14.6 4.4A7.2 7.2 0 1 0 16.2 9M15.4 .6V5H10.6" stroke="#333" stroke-width="1.2"/>`)}
          </div>
          <div class="crumbs">
            <div class="first">${icon(20, 19, svg`<rect x="1" y="1" width="17.4" height="14" rx="2.2" stroke="#555" stroke-width="1.5"/><path d="M7.4 15V18M12 15V18M4 18H15.4" stroke="#555" stroke-width="1.3"/>`)}</div>
            ${crumbs.map((c, i) => html`<div class="crumb w${i}">${chevR("#333", 1.4)}<span>${c}</span></div>`)}
            ${chevR("#333", 1.4)}
          </div>
          <div class="find"><span>Search Workspace</span>${icon(14, 14, svg`<circle cx="5.6" cy="5.6" r="4.8" stroke="#333" stroke-width="1.2"/><path d="M9 9 13.4 13.4" stroke="#333" stroke-width="1.3"/>`)}</div>
        </div>
        <div class="cmds">
          <div class="new">${icon(19, 19, svg`<circle cx="9.5" cy="9.5" r="8.7" stroke="#444" stroke-width="1.3"/><path d="M9.5 5.2V13.8M5.2 9.5H13.8" stroke="#0a76d0" stroke-width="1.5"/>`)}<span>New</span>${chevD}</div>
          <div class="sep"></div>
          <div class="grp">${cmd.cut}${cmd.copy}${cmd.paste}${cmd.rename}${cmd.share}${cmd.del}</div>
          <div class="sep"></div>
          <div class="grp2">${icon(20, 18, svg`<path d="M6 17V1.6M1 6.4 6 1.4 11 6.4" stroke="#444" stroke-width="1.4"/><path d="M14 1V16.4M9 11.6 14 16.6 19 11.6" stroke="#0a76d0" stroke-width="1.5"/>`)}<span>Sort</span>${chevD}
            <div class="view">${icon(20, 14, svg`<path d="M0 1H20M0 5H20M0 9H20M0 13H20" stroke="#555" stroke-width="1.3"/>`)}</div><span>View</span>${chevD}</div>
          <div class="sep"></div>
          <div class="more">${icon(22, 6, svg`<circle cx="2.8" cy="3" r="2.1" fill="#111"/><circle cx="10.8" cy="3" r="2.1" fill="#111"/><circle cx="18.8" cy="3" r="2.1" fill="#111"/>`)}</div>
          <div class="details">${icon(20, 16, svg`<path d="M12 .8H3.4Q.8.8.8 3.4V12.6Q.8 15.2 3.4 15.2H12" stroke="#555" stroke-width="1.3"/><path d="M12 .8H16.6Q19.2.8 19.2 3.4V12.6Q19.2 15.2 16.6 15.2H12ZM14 5.4H17M14 8H17M14 10.6H17" stroke="#0a76d0" stroke-width="1.3"/>`)}<span>Details</span></div>
        </div>
        <div class="body"><nav-pane></nav-pane><file-list></file-list></div>
        <div class="status"><span>3 items</span><div class="bar"></div>
          <div class="views"><div class="vsel">${icon(14, 14, svg`<path d="M0 1.5H14M0 5.5H14M0 9.5H14M0 13.5H14" stroke="#444"/>`)}</div>
          ${icon(14, 15, svg`<rect x=".5" y=".5" width="13" height="11" stroke="#444"/><path d="M0 14.5H14" stroke="#444"/>`)}</div></div>
      </div>
      <div class="gap"></div>
      <task-bar></task-bar>
      <ink-layer></ink-layer>
    </div>`;
  }
}
